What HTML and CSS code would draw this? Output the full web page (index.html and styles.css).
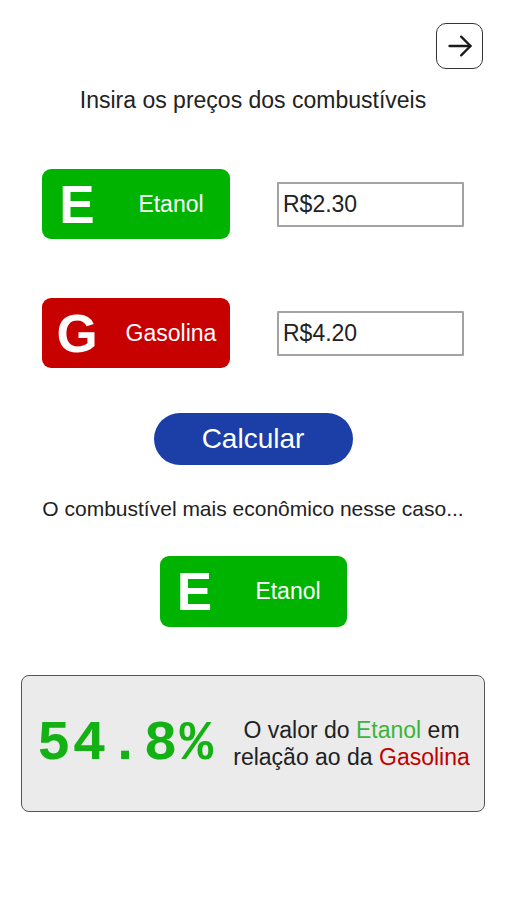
FILE: index.html
```html
<!DOCTYPE html>
<html lang="pt-BR">
<head>
    <meta charset="UTF-8">
    <meta name="viewport" content="width=device-width, initial-scale=1.0">
    <title>Etanol ou Gasolina</title>
    <link rel="stylesheet" href="styles.css">
</head>
<body>
    <div class="app">
        <div class="top-bar">
            <button class="exit-btn" type="button">
                <svg width="28" height="28" viewBox="0 0 24 24" fill="none" stroke="#1a1a1a" stroke-width="2" stroke-linecap="round" stroke-linejoin="round">
                    <line x1="3" y1="12" x2="21" y2="12"/>
                    <polyline points="13,4 21,12 13,20"/>
                </svg>
            </button>
        </div>

        <p class="title">Insira os preços dos combustíveis</p>

        <div class="fuel-row">
            <div class="fuel-badge etanol">
                <span class="fuel-letter">E</span>
                <span class="fuel-name">Etanol</span>
            </div>
            <input class="price-input" type="text" value="R$2.30">
        </div>

        <div class="fuel-row">
            <div class="fuel-badge gasolina">
                <span class="fuel-letter">G</span>
                <span class="fuel-name">Gasolina</span>
            </div>
            <input class="price-input" type="text" value="R$4.20">
        </div>

        <button class="calc-btn" type="button">Calcular</button>

        <p class="result-label">O combustível mais econômico nesse caso...</p>

        <div class="fuel-badge etanol result-badge">
            <span class="fuel-letter">E</span>
            <span class="fuel-name">Etanol</span>
        </div>

        <div class="ratio-box">
            <span class="ratio-value">54.8%</span>
            <p class="ratio-text">O valor do <span class="txt-etanol">Etanol</span> em relação ao da <span class="txt-gasolina">Gasolina</span></p>
        </div>
    </div>
</body>
</html>
```

FILE: styles.css
```css
body {
  margin: 0;
  background: #ffffff;
  font-family: 'Liberation Sans', Arial, sans-serif;
  color: #1a1a1a;
}

.app {
  display: flex;
  flex-direction: column;
  align-items: center;
  width: 506px;
}

/* barra superior */
.top-bar {
  align-self: stretch;
  display: flex;
  justify-content: flex-end;
  padding: 23px 23px 0 0;
}

.exit-btn {
  width: 47px;
  height: 46px;
  padding: 0;
  display: flex;
  align-items: center;
  justify-content: center;
  background: #fff;
  border: 1.5px solid #333;
  border-radius: 10px;
}

.title {
  margin: 18px 0 0;
  font-size: 23px;
  line-height: 26px;
  color: #222;
}

/* linhas de combustivel */
.fuel-row {
  align-self: stretch;
  display: flex;
  align-items: center;
  gap: 47px;
  padding-left: 42px;
  margin-top: 56px;
}

.fuel-row + .fuel-row {
  margin-top: 59px;
}

.fuel-badge {
  width: 188px;
  height: 70px;
  border-radius: 9px;
  display: flex;
  align-items: center;
  color: #fff;
}

.fuel-badge.etanol {
  background: #00b300;
}

.fuel-badge.gasolina {
  background: #c70000;
}

.fuel-letter {
  width: 70px;
  text-align: center;
  font-weight: bold;
  font-size: 53px;
  line-height: 1;
}

.fuel-name {
  flex: 1;
  text-align: center;
  font-size: 23px;
}

.price-input {
  box-sizing: border-box;
  width: 187px;
  height: 45px;
  padding: 0 0 0 4px;
  border: 2px solid #a3a3a3;
  border-radius: 1px;
  font-family: 'Liberation Sans', Arial, sans-serif;
  font-size: 23px;
  color: #222;
  background: #fff;
}

.calc-btn {
  margin-top: 45px;
  width: 199px;
  height: 52px;
  border: none;
  border-radius: 26px;
  background: #1b3fa7;
  color: #fff;
  font-family: 'Liberation Sans', Arial, sans-serif;
  font-size: 28px;
}

.result-label {
  margin: 32px 0 0;
  font-size: 21px;
  line-height: 24px;
  color: #222;
}

.result-badge {
  margin-top: 35px;
  width: 187px;
  height: 71px;
}

/* caixa de proporcao */
.ratio-box {
  box-sizing: border-box;
  margin-top: 48px;
  width: 464px;
  height: 137px;
  display: flex;
  align-items: center;
  gap: 12px;
  padding: 0 8px 0 15px;
  background: #ebebeb;
  border: 1.5px solid #555;
  border-radius: 8px;
}

.ratio-value {
  font-family: 'Liberation Mono', 'DejaVu Sans Mono', monospace;
  font-weight: bold;
  font-size: 56px;
  letter-spacing: 2px;
  white-space: nowrap;
  color: #13b113;
}

.ratio-text {
  flex: 1;
  margin: 0;
  text-align: center;
  font-size: 23px;
  line-height: 27px;
  color: #222;
}

.txt-etanol {
  color: #3ab53a;
}

.txt-gasolina {
  color: #c00000;
}
```
